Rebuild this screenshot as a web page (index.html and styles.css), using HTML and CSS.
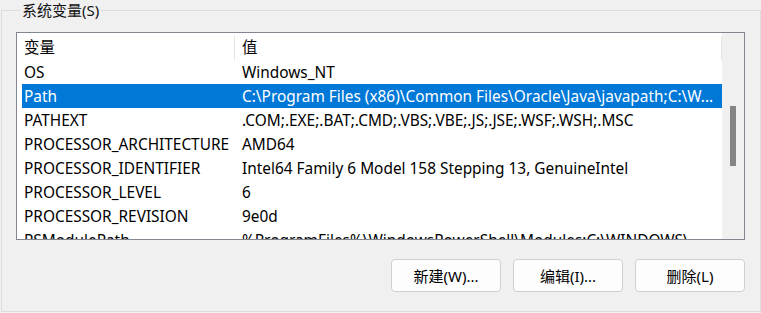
FILE: index.html
```html
<!DOCTYPE html>
<html lang="zh-CN">
<head>
    <meta charset="UTF-8">
    <title>系统变量</title>
    <link rel="stylesheet" href="styles.css">
</head>
<body>
    <fieldset class="group">
        <legend>系统变量(S)</legend>

        <!-- 变量列表 -->
        <div class="list">
            <div class="list-body">
                <div class="list-head">
                    <span class="col-name">变量</span>
                    <span class="col-value">值</span>
                </div>
                <div class="row"><span class="col-name">OS</span><span class="col-value">Windows_NT</span></div>
                <div class="row selected"><span class="col-name">Path</span><span class="col-value">C:\Program Files (x86)\Common Files\Oracle\Java\javapath;C:\W...</span></div>
                <div class="row"><span class="col-name">PATHEXT</span><span class="col-value">.COM;.EXE;.BAT;.CMD;.VBS;.VBE;.JS;.JSE;.WSF;.WSH;.MSC</span></div>
                <div class="row"><span class="col-name">PROCESSOR_ARCHITECTURE</span><span class="col-value">AMD64</span></div>
                <div class="row"><span class="col-name">PROCESSOR_IDENTIFIER</span><span class="col-value">Intel64 Family 6 Model 158 Stepping 13, GenuineIntel</span></div>
                <div class="row"><span class="col-name">PROCESSOR_LEVEL</span><span class="col-value">6</span></div>
                <div class="row"><span class="col-name">PROCESSOR_REVISION</span><span class="col-value">9e0d</span></div>
                <div class="row"><span class="col-name">PSModulePath</span><span class="col-value">%ProgramFiles%\WindowsPowerShell\Modules;C:\WINDOWS\...</span></div>
            </div>
            <div class="scrollbar"><div class="thumb"></div></div>
        </div>

        <!-- 操作按钮 -->
        <div class="actions">
            <button type="button" class="btn">新建(W)...</button>
            <button type="button" class="btn">编辑(I)...</button>
            <button type="button" class="btn">删除(L)</button>
        </div>
    </fieldset>
</body>
</html>
```

FILE: styles.css
```css
body {
    margin: 0;
    background: #f0f0f0;
    font-family: "Noto Sans", "Noto Sans CJK SC", sans-serif;
    font-size: 15.4px;
    color: #000;
}

.group {
    margin: 0 0 0 1px;
    padding: 12px 15px 19px 14px;
    border: 1px solid #dcdcdc;
    width: 729px;
}

.group legend {
    margin-left: 4px;
    padding: 0 2px;
    font-size: 15px;
    line-height: 20px;
    color: #111;
}

.list {
    display: flex;
    height: 208px;
    box-sizing: border-box;
    border: 1px solid #828790;
    background: #fff;
}

.list-body {
    flex: 1;
    padding-left: 5px;
    overflow: hidden;
}

.list-head,
.row {
    display: flex;
    white-space: nowrap;
}

.list-head {
    height: 27px;
    box-sizing: border-box;
    padding-top: 3px;
    line-height: 24px;
}

.row {
    height: 24px;
    box-sizing: border-box;
    padding-top: 1px;
    line-height: 23px;
}

.col-name {
    width: 213px;
    flex: none;
    box-sizing: border-box;
    padding-left: 2px;
}

.col-value {
    flex: 1;
    padding-left: 7px;
    overflow: hidden;
}

.list-head .col-name,
.list-head .col-value {
    border-right: 1px solid #e5e5e5;
}

.row.selected {
    background: #0078d7;
    color: #fff;
}

.scrollbar {
    width: 22px;
    flex: none;
    background: #f0f0f0;
}

.thumb {
    width: 6px;
    height: 60px;
    margin: 73px 0 0 8px;
    background: #858585;
}

.actions {
    display: flex;
    justify-content: flex-end;
    gap: 12px;
    margin-top: 19px;
}

.btn {
    width: 110px;
    height: 33px;
    border: 1px solid #d0d0d0;
    border-radius: 4px;
    background: #fdfdfd;
    font-family: inherit;
    font-size: 15px;
    color: #000;
}
```
